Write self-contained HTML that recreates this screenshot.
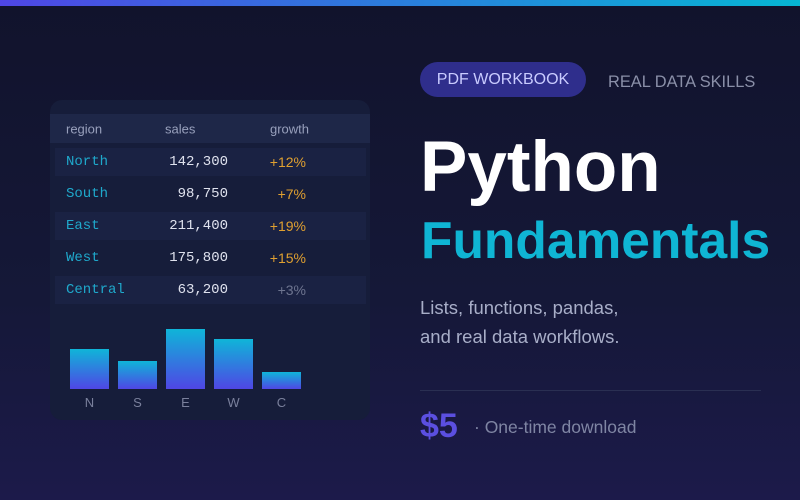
<!DOCTYPE html>
<html><head><style>
*{margin:0;padding:0;box-sizing:border-box}
body{width:800px;height:500px;overflow:hidden;position:relative;font-family:"Liberation Sans",sans-serif;background:linear-gradient(180deg,#11132c 0%,#151838 60%,#1c1a4a 100%)}
.top{position:absolute;left:0;top:0;width:800px;height:6px;background:linear-gradient(90deg,#4f46e5,#06b6d4)}
.card{position:absolute;left:50px;top:100px;width:320px;height:320px;border-radius:12px;background:#161d3a}
.hdr{position:absolute;left:50px;top:114px;width:320px;height:29px;background:#1e2748;font-size:13px;color:#98a0bc}
.hdr span,.row span{position:absolute;top:50%;transform:translateY(-50%)}
.row{position:absolute;left:55px;width:311px;height:28px;font-family:"Liberation Mono",monospace;font-size:14px}
.row.a{background:#1a2243}
.r{color:#1fa9cc;left:11px}
.s{color:#dfe2ee;right:138px}
.g{color:#e0a030;right:60px;font-family:"Liberation Sans",sans-serif}
.bar{position:absolute;width:39px;background:linear-gradient(180deg,#0fb5d8,#4f46e5)}
.lbl{position:absolute;top:395px;width:39px;text-align:center;font-size:13px;color:#7a809c}
</style></head><body>
<div class="top"></div>
<div class="card"></div>
<div class="hdr"><span style="left:16px">region</span><span style="left:115px">sales</span><span style="left:220px">growth</span></div>
<div class="row a" style="top:148px"><span class="r">North</span><span class="s">142,300</span><span class="g">+12%</span></div>
<div class="row" style="top:180px"><span class="r">South</span><span class="s">98,750</span><span class="g">+7%</span></div>
<div class="row a" style="top:212px"><span class="r">East</span><span class="s">211,400</span><span class="g">+19%</span></div>
<div class="row" style="top:244px"><span class="r">West</span><span class="s">175,800</span><span class="g">+15%</span></div>
<div class="row a" style="top:276px"><span class="r">Central</span><span class="s">63,200</span><span class="g" style="color:#6e7590">+3%</span></div>
<div class="bar" style="left:70px;top:349px;height:40px"></div>
<div class="bar" style="left:118px;top:361px;height:28px"></div>
<div class="bar" style="left:166px;top:329px;height:60px"></div>
<div class="bar" style="left:214px;top:339px;height:50px"></div>
<div class="bar" style="left:262px;top:372px;height:17px"></div>
<div class="lbl" style="left:70px">N</div><div class="lbl" style="left:118px">S</div><div class="lbl" style="left:166px">E</div><div class="lbl" style="left:214px">W</div><div class="lbl" style="left:262px">C</div>
<div style="position:absolute;left:420px;top:62px;width:166px;height:35px;border-radius:18px;background:#2f2e8c;color:#c9cbff;font-size:16px;line-height:35px;text-align:center">PDF WORKBOOK</div>
<div style="position:absolute;left:608px;top:72px;font-size:16.4px;color:#8a8fa8;line-height:20px">REAL DATA SKILLS</div>
<div style="position:absolute;left:420px;top:128px;font-size:71px;font-weight:bold;color:#fff;line-height:80px">Python</div>
<div style="position:absolute;left:421px;top:210px;font-size:51.5px;font-weight:bold;color:#0fb5d4;line-height:60px">Fundamentals</div>
<div style="position:absolute;left:420px;top:293px;font-size:18.5px;color:#a8aec8;line-height:29px">Lists, functions, pandas,<br>and real data workflows.</div>
<div style="position:absolute;left:420px;top:390px;width:341px;height:1px;background:#2a2f52"></div>
<div style="position:absolute;left:420px;top:406px;font-size:34px;font-weight:bold;color:#5b4fe0;line-height:40px">$5</div>
<div style="position:absolute;left:474px;top:417px;font-size:17.5px;color:#7f85a3;line-height:20px">· One-time download</div>
</body></html>
